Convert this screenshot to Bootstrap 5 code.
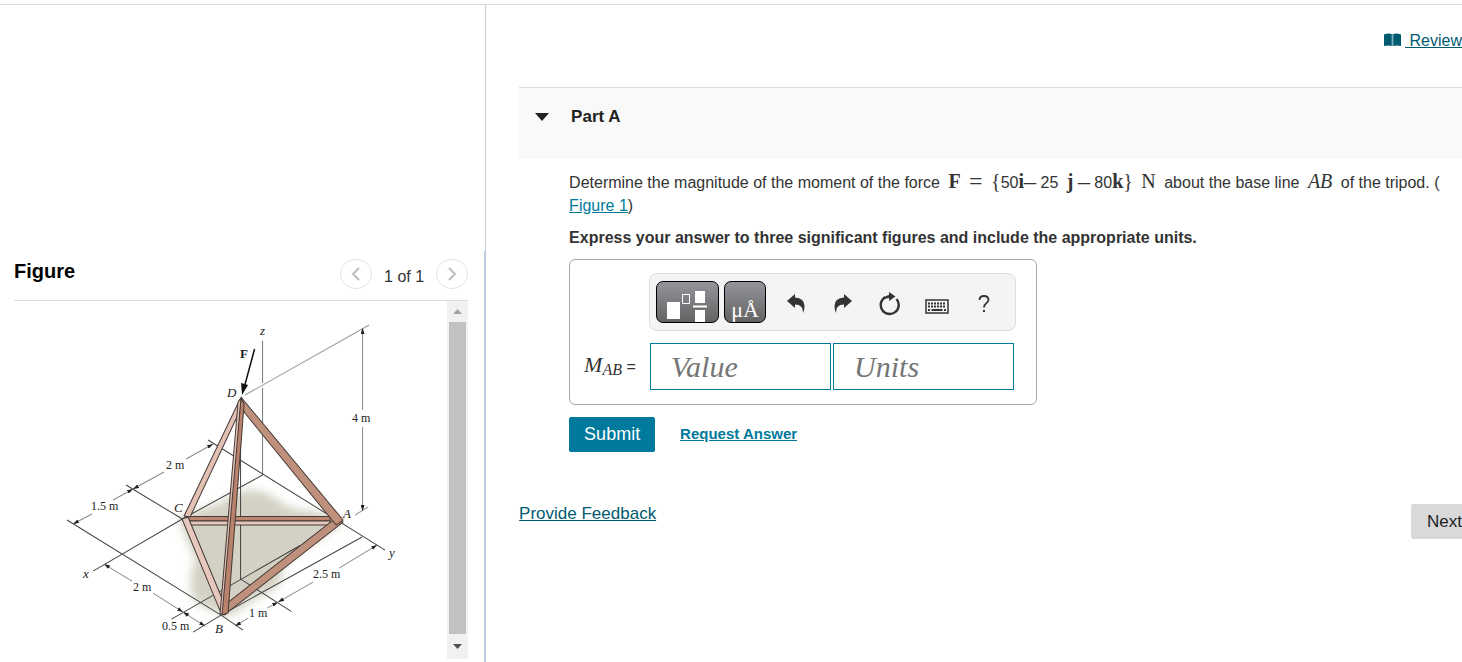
<!DOCTYPE html>
<html lang="en">
<head>
<meta charset="utf-8">
<meta name="viewport" content="width=device-width, initial-scale=1">
<title>Part A</title>
<link href="https://cdn.jsdelivr.net/npm/bootstrap@5.3.0/dist/css/bootstrap.min.css" rel="stylesheet">
<style>
body{font-family:"Liberation Sans",Arial,sans-serif;font-size:16px;line-height:23px;color:#333;background:#fff;overflow-x:hidden}
a{color:#007a9c}
.topline{height:5px;border-bottom:1px solid #ddd}
.side{flex:0 0 33.25%;min-width:400px;display:flex;flex-direction:column}
.side-blank{height:246px;border-right:1px solid #c5cdd5}
.side-figure{border-right:2px solid #b9cbdd;flex:1;padding:0 16px 3px 14px}
.figure-head{height:50px;border-bottom:1px solid #dcdcdc}
.figure-head h2{font-size:20px;line-height:24px;font-weight:700;color:#000;padding-top:8px}
.pager{gap:12px;padding-top:8px}
.pager span{line-height:30px;padding-top:3px}
.round{width:32px;height:30px;border:1px solid #e4e4e4;border-radius:50%;background:#fff;padding:0;display:flex;align-items:center;justify-content:center}
.drawing{flex:1;min-width:0}
.drawing svg{display:block;width:100%;height:auto}
.track{width:21px;background:#f1f1f1;padding:0 2px}
.track .tip{height:21px;display:flex;align-items:center;justify-content:center}
.thumb{flex:1;background:#c1c1c1;width:100%}
.track .tip-end{height:25px}
.content{flex:1;min-width:0;padding-left:33px}
.review,.deep{color:#005a70}
.review-row{height:82px;padding-top:24px}
.part-head{height:72px;background:#f9f9f9;border-top:1px solid #ddd;padding:17px 16px 0}
.toggle{border:0;background:none;padding:0;display:flex;align-items:center;gap:22px;font-weight:700;font-size:17px;line-height:23px;color:#222}
.part-body{padding-left:50px;padding-top:12px}
.mx{font-family:"Liberation Serif",serif;font-size:20px;line-height:20px}
.op{font-family:"Liberation Serif",serif;font-size:24px;line-height:20px;vertical-align:-1px}
.hint{margin:9px 0 10px}
.answer{width:468px;max-width:100%;border:1px solid #aaa;border-radius:6px;padding:13px 22px 14px 14px}
.tools{margin:0 -2px 0 65px;height:58px;background:#f4f4f4;border:1px solid #ddd;border-radius:8px;padding:7px 6px}
.tool{background:none;border:0;padding:0;width:47px;height:46px;display:flex;align-items:center;justify-content:center}
.dark{height:42px;border:1px solid #000;border-radius:7px;background:linear-gradient(#95949c,#636363);padding:0;color:#fff}
.dark svg{display:block}
.tmpl{width:63px}
.unit{width:42px;margin-left:5px;margin-right:6px}
.unit span{font-family:"Liberation Serif",serif;font-size:22px;line-height:20px;display:block;padding-top:16px}
.fields{margin-top:12px;gap:2px}
.fields label{width:64px;white-space:nowrap}
.fields .sym{font-size:22px}
.fields sub{font-size:16px;bottom:-3px}
.entry{flex:1;min-width:0;height:47px;border:1px solid #007a9c;border-radius:0;padding:0 20px;font:italic 30px/45px "Liberation Serif",serif;color:#333}
.entry::placeholder{color:#757575;opacity:1}
.submit{background:#007a9c;color:#fff;border:0;border-radius:2px;font-size:18px;line-height:23px;padding:6px 15px;width:86px;height:35px}
.request{font-size:15px;line-height:20px;font-weight:700;margin-left:25px;padding-bottom:2px}
.foot{margin-top:52px}
.foot a,.next{font-size:17px}
.foot a{line-height:20px}
.next{background:#d9d9d9;color:#222;border:0;border-radius:2px 0 0 2px;height:35px;width:51px;padding:0;text-align:right}
</style>
</head>
<body>
<div class="topline"></div>
<main class="d-flex align-items-stretch">
  <aside class="side">
    <div class="side-blank"></div>
    <section class="side-figure">
      <header class="figure-head d-flex justify-content-between align-items-start">
        <h2 class="m-0">Figure</h2>
        <div class="pager d-flex align-items-start">
          <button class="round" aria-label="Previous figure"><svg width="10" height="14" fill="none" stroke="#bdbdc2" stroke-width="2"><path d="M8 1 2 7l6 6"/></svg></button>
          <span>1 of 1</span>
          <button class="round" aria-label="Next figure"><svg width="10" height="14" fill="none" stroke="#bdbdc2" stroke-width="2"><path d="m2 1 6 6-6 6"/></svg></button>
        </div>
      </header>
      <div class="d-flex">
        <div class="drawing">
          <svg viewBox="14 301 433 358" font-family="Liberation Serif, serif" font-size="12" fill="#222">
            <defs>
              <filter id="soft" x="-20%" y="-20%" width="140%" height="140%"><feGaussianBlur stdDeviation="5"/></filter>
              <marker id="tip" viewBox="0 0 6 4" refX="6" refY="2" markerWidth="6" markerHeight="4" markerUnits="userSpaceOnUse" orient="auto-start-reverse"><path d="M0 0 6 2 0 4z" fill="#222"/></marker>
            </defs>
            <path d="M178 517 222 502 232 495Q250 485 270 495L290 508 335 515 342 524 302 550 282 565Q285 588 262 595L228 617 200 605Q184 595 195 560z" fill="#d3d1c3" filter="url(#soft)"/>
            <path d="M184 520H338L221 612z" fill="#d3d1c3"/>
            <g fill="none" stroke="#444" stroke-width="1">
              <path d="M262.500 341V383M262.500 388V475" stroke="#777"/>
              <path d="M208 440 385 550M262.500 475 184 518 93 571M126 485 184 520M67 520 221 615 243 630M221 615 362 537M240.500 400V579L291.500 611.500M171.500 619 300 545.500M193 632 221 615"/>
              <path d="M245 395 369 325M355 515 368 507" stroke="#999"/>
              <g stroke="#8a8a8a">
                <path marker-start="url(#tip)" d="M362.500 328V410"/><path marker-end="url(#tip)" d="M362.500 427V511"/>
                <path marker-start="url(#tip)" d="M213 444 186 459"/><path marker-end="url(#tip)" d="M164 472 133 489"/>
                <path marker-start="url(#tip)" d="M133 489 113 500"/><path marker-end="url(#tip)" d="M92 514 73 524"/>
                <path marker-start="url(#tip)" d="M104 564 132 581"/><path marker-end="url(#tip)" d="M153 593 183 612"/>
                <path marker-start="url(#tip)" marker-end="url(#tip)" d="M183 612 205 626"/>
                <path marker-start="url(#tip)" d="M235 626 248 618"/><path marker-end="url(#tip)" d="M267 608 278 602"/>
                <path marker-start="url(#tip)" d="M278 602 313 582"/><path marker-end="url(#tip)" d="M339 568 377 545"/>
              </g>
            </g>
            <g stroke="#453a36" stroke-width="1" stroke-linejoin="round">
              <path d="M188 516.500H330V521H188z" fill="#bb8570"/>
              <path d="M188 521H330V525H188z" fill="#e7c6bb"/>
              <path d="M240 399 243 404 190 517 184 516z" fill="#e2c0b4"/>
              <path d="M182 519 188 517 223 601 221 613z" fill="#e7c8bd"/>
              <path d="M333 520 343 522 224 615 227 603z" fill="#bf907b"/>
              <path d="M241 397 245 402 343 520 336 525 244 412z" fill="#bf907b"/>
              <path d="M238 402 241 398 226 614H220z" fill="#e2c0b4"/>
              <path d="M241 398 244 404 228 613 222 615z" fill="#b9826c"/>
            </g>
            <path d="M254.500 349 244 388" stroke="#111" stroke-width="1.500"/>
            <path d="M241 383 248 385 242 395z" fill="#111"/>
            <g>
              <text x="240" y="358" font-weight="700" font-size="13">F</text>
              <text x="352" y="422">4 m</text><text x="166" y="469">2 m</text><text x="91" y="510">1.5 m</text>
              <text x="133" y="591">2 m</text><text x="162" y="630">0.5 m</text><text x="249" y="617">1 m</text><text x="313" y="578">2.5 m</text>
              <g font-style="italic" font-size="13"><text x="260" y="335">z</text><text x="227" y="397">D</text><text x="174" y="512">C</text><text x="343" y="518">A</text><text x="215" y="633">B</text><text x="83" y="578">x</text><text x="389" y="557">y</text></g>
            </g>
          </svg>
        </div>
        <div class="track d-flex flex-column" aria-hidden="true">
          <div class="tip"><svg width="9" height="5"><path d="M0 5 4.500 0 9 5z" fill="#a3a3a3"/></svg></div>
          <div class="thumb"></div>
          <div class="tip tip-end"><svg width="9" height="5"><path d="M0 0H9L4.500 5z" fill="#505050"/></svg></div>
        </div>
      </div>
    </section>
  </aside>

  <div class="content">
    <div class="review-row d-flex justify-content-end align-items-start">
      <svg width="17" height="14" class="me-1 mt-1" viewBox="0 0 17 14"><path d="M0 1.500Q4 0 7.800 1V13Q4 12 0 13zM9.200 1Q13 0 17 1.500V13Q13 12 9.200 13z" fill="#005a70"/><path d="M8.500 1V13" stroke="#7fb0bd"/></svg>
      <a href="#" class="review">&nbsp;Review</a>
    </div>
    <div class="part-head">
      <button class="toggle" aria-expanded="true"><svg width="14" height="8"><path d="M0 0H14L7 8z" fill="#222"/></svg>Part A</button>
    </div>
    <div class="part-body">
      <p class="mb-0">Determine the magnitude of the moment of the force <b class="mx ms-1">F</b> <span class="op mx-1">=</span> <span class="mx">{</span>50<b class="mx">i</b><span class="op">–</span> 25 <b class="mx ms-1">j</b> <span class="op">–</span> 80<b class="mx">k</b><span class="mx me-1">}</span> <span class="mx me-1">N</span> about the base line <i class="mx ms-1 me-1">AB</i> of the tripod. (<br><a href="#">Figure 1</a>)</p>
      <p class="hint fw-bold">Express your answer to three significant figures and include the appropriate units.</p>
      <form class="answer" onsubmit="return false">
        <div class="tools d-flex align-items-start" role="toolbar" aria-label="Math tools">
          <button type="button" class="dark tmpl" aria-label="Templates"><svg width="61" height="40" viewBox="0 0 61 40"><g fill="#fff"><path d="M10 20H23V37H10zM38 9H48V21H38zM38 28H48V40H38zM36 23.500H50V25.500H36z"/></g><path d="M25.500 12.500H32.500V21.500H25.500z" fill="none" stroke="#fff"/></svg></button>
          <button type="button" class="dark unit" aria-label="Units"><span>μÅ</span></button>
          <button type="button" class="tool" aria-label="Undo"><svg width="18" height="20" viewBox="0 0 18 20"><path d="M0 7 8 0V3.500Q17.500 4 17.500 12 17.500 16 16 19 16.500 10.500 8 10.500V14z" fill="#333"/></svg></button>
          <button type="button" class="tool" aria-label="Redo"><svg width="18" height="20" viewBox="0 0 18 20"><path d="M18 7 10 0V3.500Q.5 4 .5 12 .5 16 2 19 1.500 10.500 10 10.500V14z" fill="#333"/></svg></button>
          <button type="button" class="tool" aria-label="Reset"><svg width="22" height="24" viewBox="0 0 22 24"><path d="M6.500 5A9 9 0 1 0 17.500 7" fill="none" stroke="#333" stroke-width="2.400"/><path d="M10 0 16.500 4.500 10 9V6Q7 6 4 8 6 3.500 10 3z" fill="#333"/></svg></button>
          <button type="button" class="tool pt-1" aria-label="Keyboard"><svg width="24" height="15" viewBox="0 0 24 15"><path d="M1 1H23V14H1z" fill="none" stroke="#333" stroke-width="1.500"/><path d="M3 4.500H21M3 7.500H21" stroke="#333" stroke-width="2" stroke-dasharray="2 1"/><path d="M3 11H5M6.500 11H17.500M19 11H21" stroke="#333" stroke-width="2"/></svg></button>
          <button type="button" class="tool" aria-label="Help"><svg width="12" height="18" viewBox="0 0 12 18"><path d="M1.500 5Q1.500 1 6 1T10.500 5C10.500 8 6 8 6 12.500" fill="none" stroke="#333" stroke-width="1.800"/><path d="M5 15H7V17H5z" fill="#333"/></svg></button>
        </div>
        <div class="fields d-flex align-items-center">
          <label for="value"><i class="mx sym">M<sub>AB</sub></i> =</label>
          <input id="value" class="entry" placeholder="Value" autocomplete="off">
          <input id="units" class="entry" placeholder="Units" aria-label="Units" autocomplete="off">
        </div>
      </form>
      <div class="d-flex align-items-center mt-2 pt-1">
        <button class="submit">Submit</button>
        <a href="#" class="request">Request Answer</a>
      </div>
    </div>
    <div class="foot d-flex justify-content-between">
      <a href="#" class="deep">Provide Feedback</a>
      <button class="next">Next</button>
    </div>
  </div>
</main>
<script src="https://cdn.jsdelivr.net/npm/bootstrap@5.3.0/dist/js/bootstrap.bundle.min.js"></script>
</body>
</html>
